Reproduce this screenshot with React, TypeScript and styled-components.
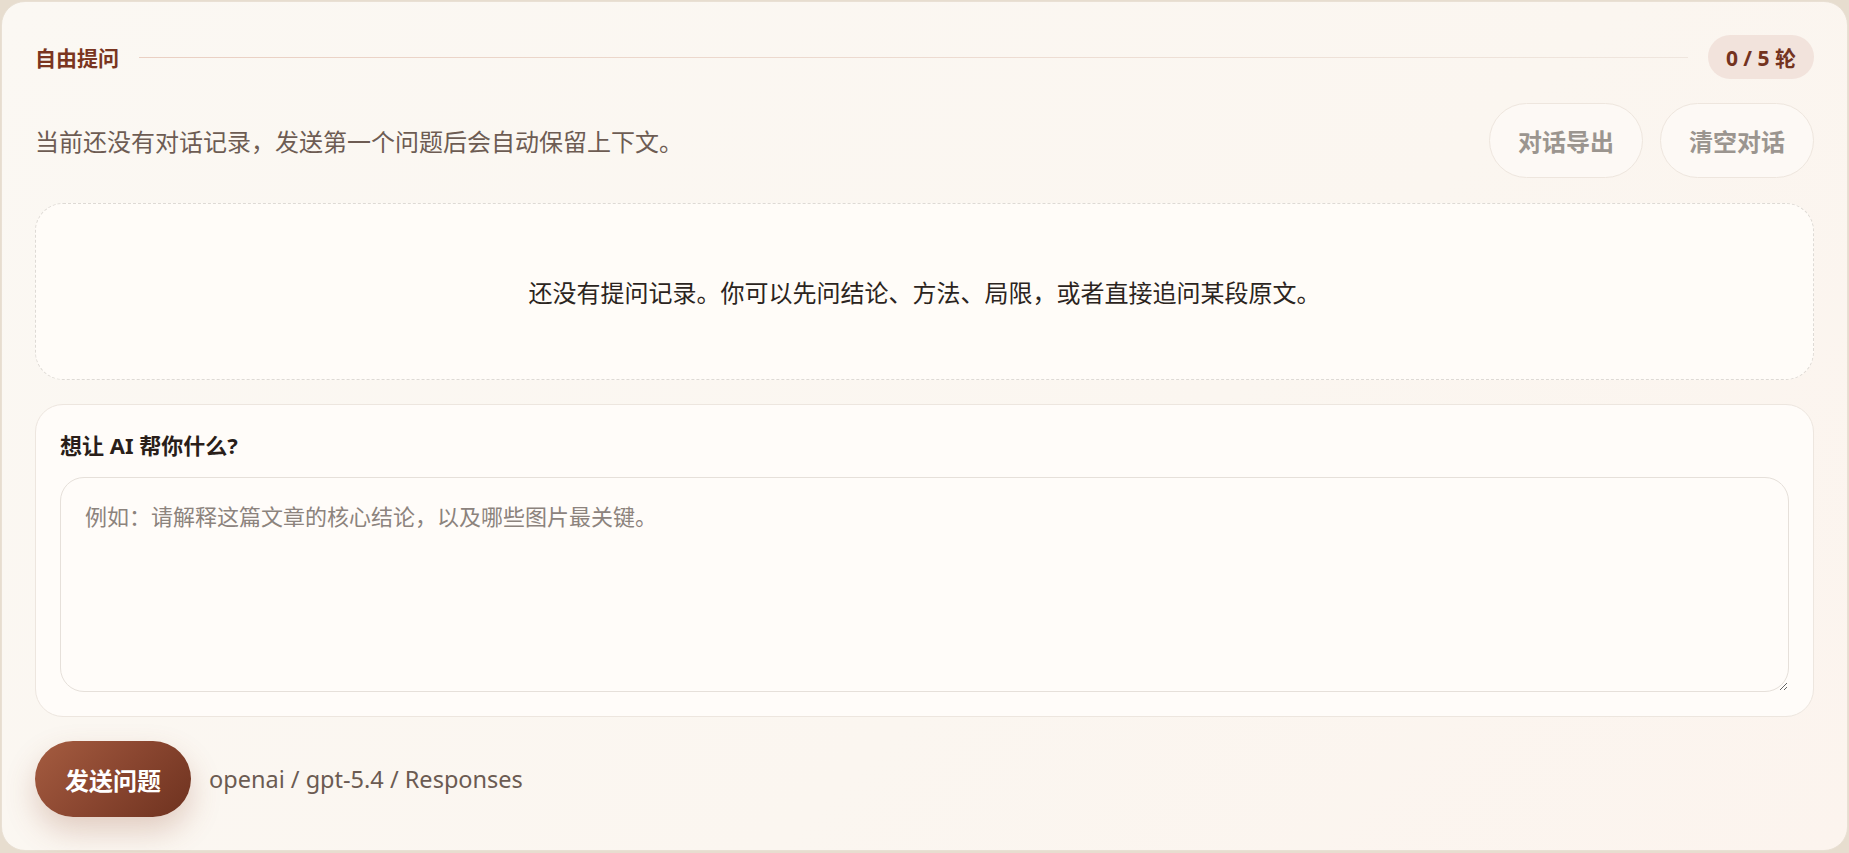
import React from 'react';
import styled, { createGlobalStyle } from 'styled-components';

const GlobalStyle = createGlobalStyle`
  * { box-sizing: border-box; }
  html, body {
    margin: 0;
    padding: 0;
    background: #e7ddcf;
    font-family: "Noto Sans", "Noto Sans CJK SC", sans-serif;
  }
  #root { padding: 1px; }
`;

export default function App() {
  return (
    <>
      <GlobalStyle />
      <StPanel>
        <StHeader>
          <StTitle>自由提问</StTitle>
          <StRule />
          <StBadge>0 / 5 轮</StBadge>
        </StHeader>

        <StToolbar>
          <StHint>当前还没有对话记录，发送第一个问题后会自动保留上下文。</StHint>
          <StActions>
            <StGhostButton>对话导出</StGhostButton>
            <StGhostButton>清空对话</StGhostButton>
          </StActions>
        </StToolbar>

        <StEmpty>还没有提问记录。你可以先问结论、方法、局限，或者直接追问某段原文。</StEmpty>

        <StComposer>
          <StLabel htmlFor="question">想让 AI 帮你什么?</StLabel>
          <StTextarea
            id="question"
            placeholder="例如：请解释这篇文章的核心结论，以及哪些图片最关键。"
          />
        </StComposer>

        <StFooter>
          <StSendButton>发送问题</StSendButton>
          <StModel>openai / gpt-5.4 / Responses</StModel>
        </StFooter>
      </StPanel>
    </>
  );
}

const StPanel = styled.section`
  display: flex;
  flex-direction: column;
  padding: 33px;
  border: 1px solid #e9e0d4;
  border-radius: 24px;
  background: linear-gradient(135deg, #fbf8f3 0%, #fbf6f0 60%, #fcf4ee 100%);
`;

const StHeader = styled.div`
  display: flex;
  align-items: center;
  gap: 20px;
  height: 44px;
`;

const StTitle = styled.h2`
  margin: 0;
  font-size: 21px;
  font-weight: 700;
  color: #7a3520;
  white-space: nowrap;
`;

const StRule = styled.div`
  flex: 1;
  height: 1px;
  background: linear-gradient(90deg, #ead0c3 0%, #efe6de 100%);
`;

const StBadge = styled.span`
  display: inline-flex;
  align-items: center;
  height: 44px;
  padding: 0 18px;
  border-radius: 22px;
  background: #f2e3dc;
  color: #74331f;
  font-size: 21px;
  font-weight: 700;
  white-space: nowrap;
`;

const StToolbar = styled.div`
  display: flex;
  align-items: center;
  justify-content: space-between;
  margin-top: 24px;
`;

const StHint = styled.p`
  margin: 0;
  font-size: 24px;
  color: #6d5c53;
`;

const StActions = styled.div`
  display: flex;
  gap: 17px;
`;

const StGhostButton = styled.button`
  height: 75px;
  padding: 0 28px;
  border: 1px solid #eee6de;
  border-radius: 38px;
  background: #fdf9f5;
  color: #9b958f;
  font-family: inherit;
  font-size: 24px;
  font-weight: 700;
  cursor: pointer;
`;

const StEmpty = styled.div`
  display: flex;
  align-items: center;
  justify-content: center;
  height: 177px;
  margin-top: 25px;
  border: 1px dashed #dedad5;
  border-radius: 28px;
  background: #fffcf8;
  color: #2b2420;
  font-size: 24px;
`;

const StComposer = styled.div`
  display: flex;
  flex-direction: column;
  gap: 16px;
  margin-top: 24px;
  padding: 24px;
  border: 1px solid #ede6df;
  border-radius: 28px;
  background: #fffcf9;
`;

const StLabel = styled.label`
  font-size: 22px;
  font-weight: 700;
  line-height: 32px;
  color: #2a1e19;
`;

const StTextarea = styled.textarea`
  height: 215px;
  padding: 21px 24px;
  border: 1px solid #e6e0da;
  border-radius: 24px;
  background: #fffcf9;
  font-family: inherit;
  font-size: 22px;
  color: #2a1e19;
  resize: vertical;
  outline: none;

  &::placeholder {
    color: #8c837d;
  }
`;

const StFooter = styled.div`
  display: flex;
  align-items: center;
  gap: 18px;
  margin-top: 24px;
`;

const StSendButton = styled.button`
  height: 76px;
  padding: 0 30px;
  border: none;
  border-radius: 38px;
  background: linear-gradient(135deg, #a55c40 0%, #8a4630 50%, #6e321f 100%);
  color: #fff;
  font-family: inherit;
  font-size: 24px;
  font-weight: 700;
  box-shadow: 0 14px 30px rgba(150, 80, 50, 0.25);
  cursor: pointer;
`;

const StModel = styled.span`
  font-size: 23.5px;
  color: #6b5b52;
`;
